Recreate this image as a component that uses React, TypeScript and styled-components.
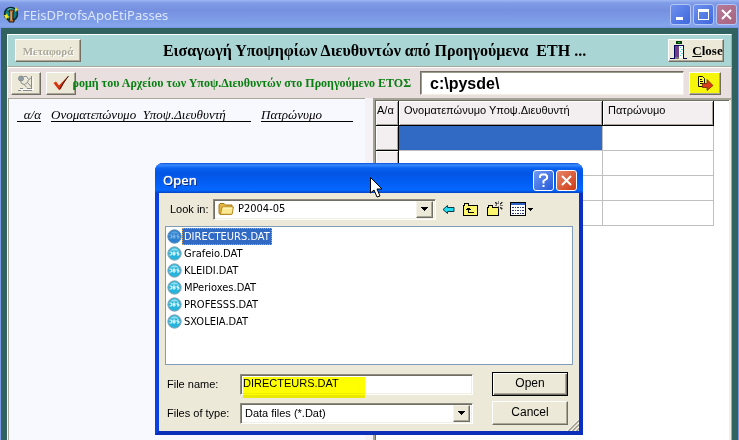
import React from "react";
import styled, { createGlobalStyle } from "styled-components";

const GlobalStyle = createGlobalStyle`
  * { box-sizing: border-box; }
  body { margin: 0; overflow: hidden; font-family: "Liberation Sans", Arial, sans-serif; font-size: 11px; color: #000; }
  button, input, select { font: inherit; color: inherit; margin: 0; border-radius: 0; }
  svg { display: block; flex: none; }
`;

const serif = `"Liberation Serif", "Times New Roman", serif`;
const tahoma = `"DejaVu Sans Condensed", "DejaVu Sans", sans-serif`;

const Window = styled.div`
  position: relative;
  display: flex;
  flex-direction: column;
  height: 100vh;
  overflow: hidden;
  background: #7b98e8;
`;

const TitleBar = styled.header`
  display: flex;
  align-items: center;
  flex: none;
  height: 28px;
  padding: 0 2px 0 3px;
  background: linear-gradient(#9db8f2 0, #809ce6 3px, #7690e0 10px, #7f9fe8 22px, #86a6ec 26px, #7693da 28px);
  color: #dbe5fb;
`;

const WindowTitle = styled.h1`
  flex: 1;
  margin: 2px 0 0 4px;
  font: 400 13px/20px "Noto Sans", "Open Sans", sans-serif;
`;

const Caption = styled.div`
  display: flex;
  gap: 2px;
`;

const CaptionButton = styled.button<{ $tone: "blue" | "rose" | "bright" | "red" }>`
  display: grid;
  place-items: center;
  width: 21px;
  height: 21px;
  padding: 0;
  border: 1px solid ${(p) => (p.$tone === "blue" || p.$tone === "rose" ? "#b3c6f5" : "#ffffff")};
  border-radius: 3px;
  background: ${(p) =>
    ({
      blue: "linear-gradient(135deg, #6e90ee, #3f68dc)",
      rose: "linear-gradient(135deg, #b57a98, #a8637e)",
      bright: "linear-gradient(135deg, #6f9af5, #2458d8)",
      red: "linear-gradient(135deg, #e8866a, #cf3a12)",
    })[p.$tone]};
`;

const Frame = styled.main`
  display: flex;
  flex-direction: column;
  flex: 1;
  min-height: 0;
  margin: 0 1px;
  padding: 6px 6px 0;
  background: #30625f;
`;

const HeaderPanel = styled.section`
  display: flex;
  align-items: center;
  flex: none;
  height: 33px;
  padding: 0 7px;
  border: 1px solid #fff;
  border-right-color: #a7a89a;
  border-bottom-color: #a7a89a;
  background: #a9d5d5;
`;

const Heading = styled.h2`
  flex: 1;
  margin: 0;
  text-align: center;
  white-space: pre;
  font: 700 16px/24px ${serif};
`;

const BevelButton = styled.button<{ $width: number; $yellow?: boolean; $small?: boolean }>`
  display: flex;
  align-items: center;
  justify-content: center;
  flex: none;
  gap: 4px;
  width: ${(p) => p.$width}px;
  height: 23px;
  padding: 0;
  overflow: hidden;
  border: 1px solid;
  border-color: #fff #716f64 #716f64 #fff;
  box-shadow: inset -1px -1px #aca899;
  background: ${(p) => (p.$yellow ? "#f6f60c" : "#ece9d8")};
  font: 700 ${(p) => (p.$small ? 11 : 13)}px/20px ${serif};
  &:disabled { color: #aca899; text-shadow: 1px 1px #fff; }
`;

const ToolPanel = styled.section`
  display: flex;
  align-items: center;
  flex: none;
  height: 31px;
  padding: 0 10px 0 3px;
  border: 1px solid #fff;
  border-right-color: #a7a89a;
  border-bottom: 0;
  background: #e9dfdf;
`;

const Pair = styled.div`
  display: flex;
  flex: none;
  gap: 5px;
`;

const PathLabel = styled.label`
  display: flex;
  justify-content: flex-end;
  flex: none;
  width: 335px;
  white-space: nowrap;
  color: #087f12;
  font: 700 12px/20px ${serif};
`;

const PathInput = styled.input`
  flex: 1;
  min-width: 0;
  height: 24px;
  margin: 0 5px 0 9px;
  padding: 2px 9px 0;
  border: 1px solid;
  border-color: #716f64 #f1efe2 #f1efe2 #716f64;
  box-shadow: inset 1px 1px #9d9b8c;
  background: #fff;
  font-size: 16px;
  font-weight: 700;
`;

const Content = styled.section`
  display: flex;
  flex: 1;
  min-height: 0;
  border-left: 1px solid #fff;
  border-right: 1px solid #a7a89a;
  background: #f4f2f5;
`;

const ReportPane = styled.div`
  flex: 1;
  min-width: 0;
  padding: 9px 0 0 8px;
  border: solid #a7a89a;
  border-width: 1px 0 0 1px;
  background: #f8f8ff;
`;

const ReportHeads = styled.div`
  display: flex;
  gap: 10px;
  font: italic 400 13px/13px ${serif};
  white-space: pre;
`;

const ReportHead = styled.span<{ $width: number; $end?: boolean }>`
  width: ${(p) => p.$width}px;
  flex: none;
  border-bottom: 1px solid #000;
  text-align: ${(p) => (p.$end ? "right" : "left")};
`;

const GridPane = styled.div`
  flex: none;
  width: 358px;
  margin-left: 8px;
  border: solid #a3a496;
  border-width: 2px 0 0 2px;
  box-shadow: inset -2px 0 #f1efe2, inset 1px 1px #716f64;
  background: #fff;
  padding: 1px 0 0 1px;
`;

const Grid = styled.table`
  table-layout: fixed;
  width: 338px;
  border-collapse: separate;
  border-spacing: 0;
`;

const GridHead = styled.th<{ $width?: number }>`
  width: ${(p) => (p.$width ? p.$width + "px" : "auto")};
  height: 25px;
  padding: 0 0 6px ${(p) => (p.$width === 23 ? 1 : 5)}px;
  overflow: hidden;
  border: solid #000;
  border-width: 0 1px 1px 0;
  box-shadow: inset 1px 1px #fff, inset -1px -1px #a8a49c;
  background: #f3eff0;
  font-weight: 400;
  line-height: 16px;
  text-align: left;
  white-space: nowrap;
`;

const GridCell = styled.td<{ $selected?: boolean }>`
  height: 25px;
  padding: 0;
  border: solid #c0c0c0;
  border-width: 0 1px 1px 0;
  background: ${(p) => (p.$selected ? "#316ac5" : "#fff")};
`;

const Dialog = styled.form`
  position: absolute;
  left: 155px;
  top: 163px;
  width: 428px;
  border: solid #0831d9;
  border-width: 0 4px 4px;
  border-color: #0a3fe0 #0b2fc4 #0b2fb8 #0a3fe0;
  border-radius: 8px 8px 0 0;
  background: #ece9d8;
`;

const DialogTitle = styled.div`
  display: flex;
  align-items: center;
  justify-content: space-between;
  height: 30px;
  margin: 0 -4px;
  padding: 4px 6px 0 8px;
  border-radius: 8px 8px 0 0;
  background: linear-gradient(#0a50dc 0, #3a8cff 2px, #0a62f0 5px, #0355e4 10px, #0260f8 22px, #0568ff 27px, #0344c8 30px);
  color: #fff;
  font: 500 13px/20px "Noto Sans", "Open Sans", sans-serif;
  text-shadow: 1px 1px #0b2f8a, 0 0 1px #fff;
`;

const LookRow = styled.div`
  display: flex;
  align-items: center;
  height: 32px;
  padding: 0 44px 0 11px;
`;

const LookLabel = styled.label`
  width: 43px;
`;

const Sunken = styled.div`
  position: relative;
  display: flex;
  align-items: center;
  height: 21px;
  border: 1px solid;
  border-color: #8d8b7d #fff #fff #8d8b7d;
  box-shadow: inset 1px 1px #716f64, inset -1px -1px #f1efe2;
  background: #fff;
  padding: 2px;
`;

const LookBox = styled(Sunken)`
  width: 223px;
  gap: 2px;
  padding-left: 4px;
  font: 11px/16px ${tahoma};
`;

const Select = styled.select`
  flex: 1;
  min-width: 0;
  height: 17px;
  padding: 0 0 0 2px;
  border: 0;
  appearance: none;
  background: transparent;
  outline: 0;
`;

const Drop = styled.span`
  display: grid;
  place-items: center;
  width: 17px;
  height: 17px;
  border: 1px solid;
  border-color: #f6f4ea #716f64 #716f64 #f6f4ea;
  box-shadow: inset -1px -1px #aca899;
  background: #ece9d8;
  pointer-events: none;
`;

const Tools = styled.div`
  display: flex;
  align-items: center;
  gap: 7px;
  margin-left: 6px;
`;

const FlatButton = styled.button`
  display: grid;
  place-items: center;
  height: 18px;
  padding: 0;
  border: 0;
  background: transparent;
`;

const FileList = styled.ul`
  height: 139px;
  margin: 1px 6px 0;
  padding: 1px 1px 0;
  border: 1px solid #7f9db9;
  background: #fff;
  list-style: none;
  font: 11px/16px ${tahoma};
`;

const FileItem = styled.li`
  display: flex;
  align-items: center;
  height: 17px;
`;

const FileName = styled.span<{ $selected?: boolean }>`
  padding: 0 1px;
  border: 1px ${(p) => (p.$selected ? "dotted #e0a040" : "solid transparent")};
  background: ${(p) => (p.$selected ? "#316ac5" : "transparent")};
  color: ${(p) => (p.$selected ? "#fff" : "#000")};
  line-height: 15px;
`;

const Fields = styled.div`
  display: grid;
  grid-template-columns: 73px 233px 95px;
  row-gap: 5px;
  align-items: center;
  padding: 7px 0 6px 8px;
`;

const NameInput = styled.input`
  width: 100%;
  height: 17px;
  padding: 0 0 2px;
  border: 0;
  outline: 0;
  background: transparent;
`;

const Highlight = styled.span`
  position: absolute;
  left: 2px;
  top: 2px;
  width: 122px;
  height: 21px;
  background: #ff0;
  mix-blend-mode: multiply;
  pointer-events: none;
`;

const DialogButton = styled.button<{ $primary?: boolean }>`
  justify-self: end;
  height: 24px;
  width: 76px;
  padding: 0 0 2px;
  border: 1px solid;
  border-color: ${(p) => (p.$primary ? "#000" : "#fff #716f64 #716f64 #fff")};
  box-shadow: ${(p) =>
    p.$primary ? "inset 1px 1px #fff, inset -1px -1px #716f64, inset -2px -2px #aca899" : "inset -1px -1px #aca899"};
  background: #ece9d8;
  font-size: 12px;
`;

const Grip = styled.svg`
  position: absolute;
  right: 0;
  bottom: 0;
`;

const Pointer = styled.svg`
  position: absolute;
  left: 370px;
  top: 177px;
`;

const Arrow = () => (
  <svg width="7" height="4" viewBox="0 0 7 4" shapeRendering="crispEdges">
    <path d="M0 0h7v1H6v1H5v1H4v1H3V3H2V2H1V1H0z" />
  </svg>
);

const AppIcon = () => (
  <svg width="16" height="17" viewBox="0 0 16 17">
    <circle cx="8" cy="8" r="6.5" fill="#0b7d80" stroke="#05282c" strokeWidth="1.5" />
    <path d="M4 3.5 7 2l4 1 2 3-3-1H6z" fill="#59c8c0" />
    <path d="M6 4h5v2h-1v8h1v2H6v-2h1V6H6z" fill="#b8793a" stroke="#26170c" />
    <path d="M8 6v8" stroke="#efc58a" />
    <path d="M1 9h2l1-2 1 3 2 1-3 1-1 2-1-3zM12 3l1-2 1 2 2 0-2 1-1 2-1-2z" fill="#f5e719" />
  </svg>
);

const SearchHandIcon = () => (
  <svg width="18" height="17" viewBox="0 0 18 17" fill="none" stroke="#8a8c8c">
    <path d="M2 14.500h15M16 2v12M8 2l4 4" stroke="#fff" />
    <circle cx="4" cy="3.500" r="2.500" fill="#8d9da8" />
    <path d="M6.500 1.500h3l2 3-1 3-3 2-3-1-1-3M7 9.500l3 3M10.500 7.500l4 4.500M14.500 1v12M12 4.500l2.500-2" />
    <path d="M1 15.500h3M6 15.500h9M3 13.500h3M10 13.500h5" />
  </svg>
);

const CheckIcon = () => (
  <svg width="18" height="16" viewBox="0 0 18 16">
    <path d="M1.500 8 4 6.500 7 10.500 16 1 8.500 14.500 6.500 14.500z" fill="#d8330c" />
    <path d="M7.500 14.500 11 8.500 16.500 1" fill="none" stroke="#38180e" />
  </svg>
);

const DoorIcon = () => (
  <svg width="19" height="19" viewBox="0 0 19 19" shapeRendering="crispEdges">
    <path d="M7 0h6v3H7z" fill="#063b0d" />
    <path d="M9 1h2v1H9z" fill="#20ad38" />
    <path d="M5 4h5v13H5z" fill="#743e86" />
    <path d="M10 5h4v12h-4z" fill="#fff" />
    <path d="M11 6h1v1h-1zM12 8h2v1h-2zM11 10h1v1h-1zM12 12h2v1h-2zM11 14h1v1h-1z" fill="#4dd" />
    <path d="M1 17h4V4h9v13h4" fill="none" stroke="#06065e" strokeWidth="1" />
    <path d="M6 16h4v2H6z" fill="#777" />
  </svg>
);

const ExportIcon = () => (
  <svg width="18" height="17" viewBox="0 0 18 17">
    <path d="M2.500 1.500h4l2 2v8h-6z" fill="#ffff35" stroke="#151500" />
    <path d="M4 4.500h2M4 6.500h3M4 8.500h3" stroke="#151500" />
    <path d="M6.500 8.500H11v-4l6 6-6 5v-3H6.500z" fill="#d83d18" stroke="#621d09" strokeWidth=".7" />
  </svg>
);

const FolderIcon = () => (
  <svg width="16" height="14" viewBox="0 0 16 14">
    <path d="M1 11V3l1-1.500h4L7.500 3H14v8.500l-1 1H2z" fill="#e2b53e" stroke="#a67818" />
    <path d="M2.500 12.300 4 5h11.500L14 12.300z" fill="#fbe992" stroke="#b88b25" />
    <path d="M5 6h9" stroke="#fffbd2" />
  </svg>
);

const FileIcon = ({ selected }: { selected?: boolean }) => (
  <svg width="15" height="15" viewBox="0 0 15 15">
    <circle cx="7.500" cy="7.500" r="6.700" fill={selected ? "#2c80cf" : "#27b4dc"} stroke={selected ? "#5f8dba" : "#91a7b2"} />
    <path d="M3 4.500Q7.500 0 12 4.500z" fill={selected ? "#5a9edc" : "#91ddec"} />
    <path
      d="M2.500 6h2v3h-2M6 6h2v3H6V6M6 7.500h2M12 6h-2v1.500h2V9h-2"
      fill="none"
      stroke={selected ? "#7db4e2" : "#e4fbff"}
    />
  </svg>
);

const BackIcon = () => (
  <svg width="13" height="11" viewBox="0 0 13 11">
    <path d="M1 5.500 5.500 1.500v2H12v4H5.500v2z" fill="#22dcf2" stroke="#073b48" />
  </svg>
);

const UpIcon = () => (
  <svg width="17" height="15" viewBox="0 0 17 15" shapeRendering="crispEdges">
    <path d="M1.500 13.500v-10h1v-2h4v2h9v10z" fill="#fbf66d" stroke="#000" />
    <path d="M6.500 6v4.500h5M4 7.500h5M5 6.500h3" fill="none" stroke="#000" />
  </svg>
);

const NewFolderIcon = () => (
  <svg width="17" height="16" viewBox="0 0 17 16" shapeRendering="crispEdges">
    <path d="M1.500 14.500v-8h1v-2h4v2h6v8z" fill="#fbf66d" stroke="#000" />
    <path d="M12.500 0v3M12.500 5v3M9 4.500h2M14 4.500h3M9 1h1v1H9zM10 2h1v1h-1zM15 1h1v1h-1zM14 2h1v1h-1zM14 6h1v1h-1zM15 7h1v1h-1z" stroke="#333" strokeWidth=".6" />
  </svg>
);

const ViewIcon = () => (
  <svg width="24" height="15" viewBox="0 0 24 15" shapeRendering="crispEdges">
    <path d="M.5.500h15v13H.500z" fill="#fff" stroke="#000" />
    <path d="M1 1h14v2H1z" fill="#2f63c6" />
    <path
      d="M2 5h2v1H2zM5 5h1v1H5zM7 5h2v1H7zM10 5h1v1h-1zM12 5h2v1h-2zM2 8h2v1H2zM5 8h1v1H5zM7 8h2v1H7zM10 8h1v1h-1zM12 8h2v1h-2zM2 11h2v1H2zM5 11h1v1H5zM7 11h2v1H7zM10 11h1v1h-1zM12 11h2v1h-2z"
      fill="#26346c"
    />
    <path d="M18 6h5v1h-1v1h-1v1h-1V8h-1V7h-1z" />
  </svg>
);

const files = ["DIRECTEURS.DAT", "Grafeio.DAT", "KLEIDI.DAT", "MPerioxes.DAT", "PROFESSS.DAT", "SXOLEIA.DAT"];

export default function App() {
  return (
    <>
      <GlobalStyle />
      <Window>
        <TitleBar>
          <AppIcon />
          <WindowTitle>FEisDProfsApoEtiPasses</WindowTitle>
          <Caption>
            <CaptionButton $tone="blue" aria-label="Minimize">
              <svg width="13" height="13"><path d="M2 9h7v3H2z" fill="#fff" /></svg>
            </CaptionButton>
            <CaptionButton $tone="blue" aria-label="Maximize">
              <svg width="13" height="13"><path d="M1 1h11v11H1zM2 4v7h9V4z" fill="#fff" fillRule="evenodd" /></svg>
            </CaptionButton>
            <CaptionButton $tone="rose" aria-label="Close window">
              <svg width="13" height="13"><path d="m2 2 9 9m0-9-9 9" stroke="#fff" strokeWidth="2" /></svg>
            </CaptionButton>
          </Caption>
        </TitleBar>

        <Frame>
          <HeaderPanel>
            <BevelButton $width={66} $small disabled>Μεταφορά</BevelButton>
            <Heading>Εισαγωγή Υποψηφίων Διευθυντών από Προηγούμενα  ΕΤΗ ...</Heading>
            <BevelButton $width={56}>
              <DoorIcon />
              <span><u>C</u>lose</span>
            </BevelButton>
          </HeaderPanel>

          <ToolPanel>
            <Pair>
              <BevelButton $width={30} aria-label="Search"><SearchHandIcon /></BevelButton>
              <BevelButton $width={30} aria-label="Accept"><CheckIcon /></BevelButton>
            </Pair>
            <PathLabel htmlFor="path">ρομή του Αρχείου των Υποψ.Διευθυντών στο Προηγούμενο ΕΤΟΣ</PathLabel>
            <PathInput id="path" defaultValue={"c:\\pysde\\"} />
            <BevelButton $width={32} $yellow aria-label="Export"><ExportIcon /></BevelButton>
          </ToolPanel>

          <Content>
            <ReportPane>
              <ReportHeads>
                <ReportHead $width={24} $end>α/α</ReportHead>
                <ReportHead $width={200}>Ονοματεπώνυμο  Υποψ.Διευθυντή</ReportHead>
                <ReportHead $width={92}>Πατρώνυμο</ReportHead>
              </ReportHeads>
            </ReportPane>
            <GridPane>
              <Grid>
                <thead>
                  <tr>
                    <GridHead $width={23}>Α/α</GridHead>
                    <GridHead $width={204}>Ονοματεπώνυμο Υποψ.Διευθυντή</GridHead>
                    <GridHead>Πατρώνυμο</GridHead>
                  </tr>
                </thead>
                <tbody>
                  {[0, 1, 2, 3].map((row) => (
                    <tr key={row}>
                      <GridHead as="th" scope="row" />
                      <GridCell $selected={row === 0} />
                      <GridCell />
                    </tr>
                  ))}
                </tbody>
              </Grid>
            </GridPane>
          </Content>
        </Frame>

        <Dialog role="dialog" aria-label="Open" onSubmit={(e) => e.preventDefault()}>
          <DialogTitle>
            <span>Open</span>
            <Caption>
              <CaptionButton type="button" $tone="bright" aria-label="Help">
                <svg width="13" height="15">
                  <path d="M3 5V3l1.500-1.500h4L10 3v2.500L6.500 8v2.500M6.500 12v2" fill="none" stroke="#fff" strokeWidth="2" />
                </svg>
              </CaptionButton>
              <CaptionButton type="button" $tone="red" aria-label="Close dialog">
                <svg width="13" height="13"><path d="m2 2 9 9m0-9-9 9" stroke="#fff" strokeWidth="2" /></svg>
              </CaptionButton>
            </Caption>
          </DialogTitle>

          <LookRow>
            <LookLabel htmlFor="look">Look in:</LookLabel>
            <LookBox>
              <FolderIcon />
              <Select id="look"><option>P2004-05</option></Select>
              <Drop><Arrow /></Drop>
            </LookBox>
            <Tools>
              <FlatButton type="button" aria-label="Back"><BackIcon /></FlatButton>
              <FlatButton type="button" aria-label="Up one level"><UpIcon /></FlatButton>
              <FlatButton type="button" aria-label="New folder"><NewFolderIcon /></FlatButton>
              <FlatButton type="button" aria-label="View"><ViewIcon /></FlatButton>
            </Tools>
          </LookRow>

          <FileList>
            {files.map((name, i) => (
              <FileItem key={name}>
                <FileIcon selected={i === 0} />
                <FileName $selected={i === 0}>{name}</FileName>
              </FileItem>
            ))}
          </FileList>

          <Fields>
            <label htmlFor="name">File name:</label>
            <Sunken>
              <NameInput id="name" defaultValue="DIRECTEURS.DAT" />
              <Highlight />
            </Sunken>
            <DialogButton type="submit" $primary>Open</DialogButton>
            <label htmlFor="type">Files of type:</label>
            <Sunken>
              <Select id="type"><option>Data files (*.Dat)</option></Select>
              <Drop><Arrow /></Drop>
            </Sunken>
            <DialogButton type="button">Cancel</DialogButton>
          </Fields>
          <Grip width="12" height="12" viewBox="0 0 12 12">
            <path d="M0 12 12 0M4 12l8-8M8 12l4-4" stroke="#fff" />
            <path d="M1.500 12 12 1.500M5.500 12 12 5.500M9.500 12 12 9.500" stroke="#9d9a88" strokeWidth="1.500" />
          </Grip>
        </Dialog>

        <Pointer width="13" height="21" viewBox="0 0 13 21">
          <path d="M.5.500v15.500l3.500-3 3 7 3-1-3-7h5z" fill="#fff" stroke="#000" />
        </Pointer>
      </Window>
    </>
  );
}
